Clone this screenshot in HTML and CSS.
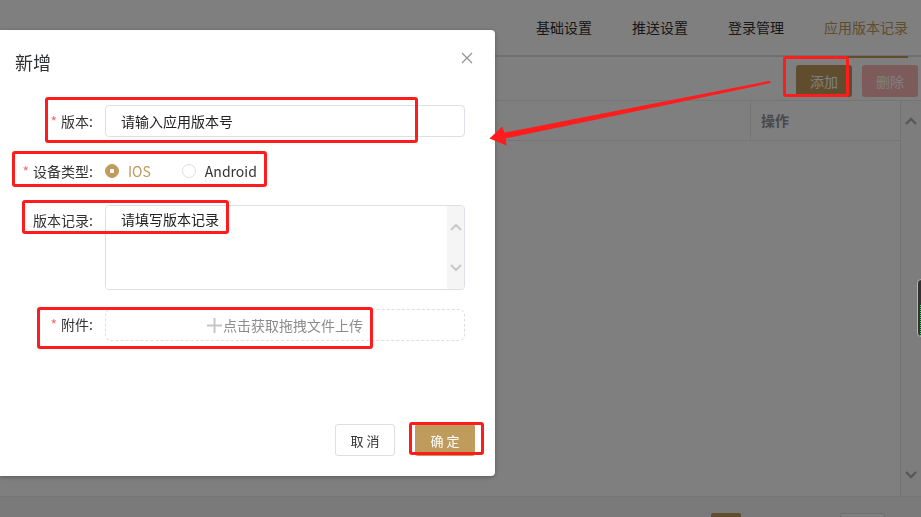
FILE: index.html
```html
<!DOCTYPE html>
<html lang="zh-CN">
<head>
  <meta charset="UTF-8" />
  <meta name="viewport" content="width=device-width, initial-scale=1.0"/>
  <title>应用版本记录</title>
  <link rel="stylesheet" href="styles.css">
</head>
<body>

  <div class="page">
    <div class="tabs">
      <span class="tab">基础设置</span>
      <span class="tab">推送设置</span>
      <span class="tab">登录管理</span>
      <span class="tab active">应用版本记录</span>
    </div>

    <div class="toolbar">
      <button class="btn btn-gold">添加</button>
      <button class="btn btn-danger">删除</button>
    </div>

    <div class="table">
      <div class="table-main">
        <div class="table-head">
          <div class="th th-grow"></div>
          <div class="th th-op">操作</div>
        </div>
      </div>
      <div class="table-scroll">
        <svg width="12" height="8" viewBox="0 0 12 8"><polyline points="1,7 6,2 11,7" fill="none" stroke="#b0b0b0" stroke-width="2.4"/></svg>
        <svg width="12" height="8" viewBox="0 0 12 8"><polyline points="1,1 6,6 11,1" fill="none" stroke="#b0b0b0" stroke-width="2.4"/></svg>
      </div>
    </div>

    <div class="pager">
      <span class="pager-cur"></span>
      <span class="pager-box"></span>
    </div>
  </div>

  <div class="mask"></div>

  <div class="dialog">
    <div class="dialog-header">
      <span class="dialog-title">新增</span>
      <button class="dialog-close" type="button">
        <svg width="12" height="12" viewBox="0 0 12 12"><path d="M1 1L11 11M11 1L1 11" stroke="#909399" stroke-width="1.2"/></svg>
      </button>
    </div>

    <form class="dialog-body">
      <div class="form-item">
        <label class="form-label required">版本:</label>
        <input class="input" type="text" placeholder="请输入应用版本号" />
      </div>

      <div class="form-item">
        <label class="form-label required">设备类型:</label>
        <div class="radios">
          <label class="radio checked"><span class="radio-dot"></span>IOS</label>
          <label class="radio"><span class="radio-dot"></span>Android</label>
        </div>
      </div>

      <div class="form-item">
        <label class="form-label label-top">版本记录:</label>
        <div class="textarea-wrap">
          <textarea class="textarea" placeholder="请填写版本记录"></textarea>
          <div class="textarea-scroll">
            <svg width="12" height="8" viewBox="0 0 12 8"><polyline points="1,7 6,2 11,7" fill="none" stroke="#c8c8c8" stroke-width="2"/></svg>
            <svg width="12" height="8" viewBox="0 0 12 8"><polyline points="1,1 6,6 11,1" fill="none" stroke="#c8c8c8" stroke-width="2"/></svg>
          </div>
        </div>
      </div>

      <div class="form-item">
        <label class="form-label required">附件:</label>
        <div class="upload">
          <svg width="15" height="15" viewBox="0 0 15 15"><path d="M7.5 0V15M0 7.5H15" stroke="#c6c6c6" stroke-width="2"/></svg>
          <span>点击获取拖拽文件上传</span>
        </div>
      </div>
    </form>

    <div class="dialog-footer">
      <button class="btn btn-plain" type="button">取 消</button>
      <button class="btn btn-gold" type="button">确 定</button>
    </div>
  </div>

  <!-- annotations drawn on top of the screenshot -->
  <div class="mark mark-version"></div>
  <div class="mark mark-device"></div>
  <div class="mark mark-record"></div>
  <div class="mark mark-file"></div>
  <div class="mark mark-add"></div>
  <div class="mark mark-ok"></div>
  <svg class="arrow" width="921" height="517" viewBox="0 0 921 517">
    <polygon points="770,80.8 770.6,83 505.6,138.4 506.6,145.5 489.5,138.4 502.2,126.4 504.5,132.6" fill="#ff1c1c"/>
  </svg>

  <div class="widget"></div>

</body>
</html>
```

FILE: styles.css
```css
* {
  box-sizing: border-box;
}
body {
  margin: 0;
  width: 921px;
  height: 517px;
  overflow: hidden;
  font-family: "Noto Sans CJK SC", "Noto Sans", sans-serif;
  font-size: 14px;
  color: #303133;
  background: #f4f4f4;
}
button {
  font-family: inherit;
}

/* page behind the dialog */
.tabs {
  display: flex;
  justify-content: flex-end;
  gap: 40px;
  height: 57px;
  padding-right: 13px;
  background: #fff;
  border-bottom: 2px solid #dcdfe6;
}
.tab {
  position: relative;
  line-height: 55px;
}
.tab.active {
  color: #bf9b5c;
}
.tab.active::after {
  content: "";
  position: absolute;
  left: 23px;
  right: 0;
  bottom: -3px;
  height: 2px;
  background: #bf9b5c;
}
.toolbar {
  display: flex;
  justify-content: flex-end;
  gap: 10px;
  padding: 8px 3px 3px;
  background: #fff;
}
.btn {
  width: 56px;
  height: 32px;
  border: none;
  border-radius: 3px;
  color: #fff;
  font-size: 14px;
  padding: 0;
}
.btn-gold {
  background: #bf9b5c;
}
.btn-danger {
  background: #fab6b6;
}
.table {
  display: flex;
  height: 397px;
  background: #fff;
  border-top: 1px solid #ebebeb;
  border-bottom: 1px solid #ebebeb;
}
.table-main {
  flex: 1;
}
.table-head {
  display: flex;
  height: 40px;
  border-bottom: 1px solid #ebebeb;
}
.th-grow {
  flex: 1;
}
.th-op {
  width: 150px;
  border-left: 1px solid #ebebeb;
  padding-left: 10px;
  line-height: 39px;
  font-weight: bold;
  color: #909399;
}
.table-scroll {
  width: 21px;
  border-left: 1px solid #e6e6e6;
  background: #fafafa;
  display: flex;
  flex-direction: column;
  justify-content: space-between;
  align-items: center;
  padding: 16px 0 17px;
}
.pager {
  display: flex;
  justify-content: flex-end;
  gap: 99px;
  padding: 16px 36px 0 0;
}
.pager-cur {
  width: 30px;
  height: 28px;
  background: #bf9b5c;
  border-radius: 2px;
}
.pager-box {
  width: 45px;
  height: 28px;
  background: #fff;
  border: 1px solid #dcdfe6;
  border-radius: 3px;
}

.mask {
  position: fixed;
  inset: 0;
  background: rgba(0, 0, 0, 0.5);
}

/* dialog */
.dialog {
  position: absolute;
  left: 0;
  top: 30px;
  width: 495px;
  height: 446px;
  background: #fff;
  border-radius: 0 4px 4px 0;
  box-shadow: 0 1px 4px rgba(0, 0, 0, 0.3);
  display: flex;
  flex-direction: column;
}
.dialog-header {
  position: relative;
  padding: 20px 15px 0;
}
.dialog-title {
  display: block;
  font-size: 18px;
  line-height: 24px;
  color: #303133;
}
.dialog-close {
  position: absolute;
  top: 22px;
  right: 22px;
  width: 12px;
  height: 12px;
  padding: 0;
  border: none;
  background: none;
  display: flex;
}
.dialog-body {
  margin: 0;
  padding: 31px 30px 0 0;
}
.form-item {
  display: flex;
  margin-bottom: 18px;
}
.form-label {
  width: 105px;
  padding-right: 12px;
  text-align: right;
  line-height: 32px;
  color: #333;
}
.label-top {
  line-height: 30px;
}
.form-label.required::before {
  content: "*";
  color: #f56c6c;
  margin-right: 4px;
}
.input {
  flex: 1;
  height: 32px;
  border: 1px solid #dcdfe6;
  border-radius: 4px;
  padding: 0 15px;
  font-family: inherit;
  font-size: 14px;
  color: #333;
  outline: none;
}
.input::placeholder,
.textarea::placeholder {
  color: #222;
}
.radios {
  display: flex;
  align-items: center;
  height: 32px;
}
.radio {
  display: flex;
  align-items: center;
  gap: 9px;
  margin-right: 31px;
  color: #333;
}
.radio.checked {
  color: #bf9b5c;
}
.radio-dot {
  width: 14px;
  height: 14px;
  border: 1px solid #dcdfe6;
  border-radius: 50%;
  background: #fff;
}
.radio.checked .radio-dot {
  border-color: #bf9b5c;
  background: #bf9b5c radial-gradient(circle, #fff 2px, transparent 2.5px);
}
.textarea-wrap {
  flex: 1;
  height: 85px;
  display: flex;
  border: 1px solid #dcdfe6;
  border-radius: 4px;
  overflow: hidden;
}
.textarea {
  flex: 1;
  border: none;
  resize: none;
  outline: none;
  padding: 3px 15px;
  font-family: inherit;
  font-size: 14px;
  line-height: 21px;
}
.textarea-scroll {
  width: 17px;
  background: #f5f5f5;
  display: flex;
  flex-direction: column;
  justify-content: space-between;
  align-items: center;
  padding: 17px 0 17px;
}
.upload {
  flex: 1;
  height: 32px;
  border: 1px dashed #dcdfe6;
  border-radius: 6px;
  display: flex;
  align-items: center;
  justify-content: center;
  gap: 1px;
  color: #8c8c8c;
  margin-top: 1px;
}
.dialog-footer {
  margin-top: auto;
  display: flex;
  justify-content: flex-end;
  gap: 20px;
  padding: 0 20px 20px;
}
.dialog-footer .btn {
  width: 60px;
  font-size: 13px;
}
.btn-plain {
  background: #fff;
  border: 1px solid #dcdfe6;
  color: #333;
}

/* red annotation marks */
.mark {
  position: absolute;
  border: 3px solid #ff1c1c;
  border-radius: 3px;
}
.mark-version { left: 45px; top: 97px; width: 373px; height: 46px; }
.mark-device { left: 12px; top: 151px; width: 255px; height: 36px; }
.mark-record { left: 22px; top: 200px; width: 207px; height: 34px; }
.mark-file { left: 37px; top: 307px; width: 336px; height: 42px; }
.mark-add { left: 783px; top: 56px; width: 66px; height: 41px; }
.mark-ok { left: 409px; top: 422px; width: 75px; height: 33px; }
.arrow {
  position: absolute;
  left: 0;
  top: 0;
}

.widget {
  position: absolute;
  left: 917px;
  top: 279px;
  width: 12px;
  height: 58px;
  border: 1px solid #b5b5b5;
  border-radius: 4px;
  background: #333 repeating-linear-gradient(#333 0 1px, #22e055 1px 2px) 2px 24px / 4px 32px no-repeat;
}
```
